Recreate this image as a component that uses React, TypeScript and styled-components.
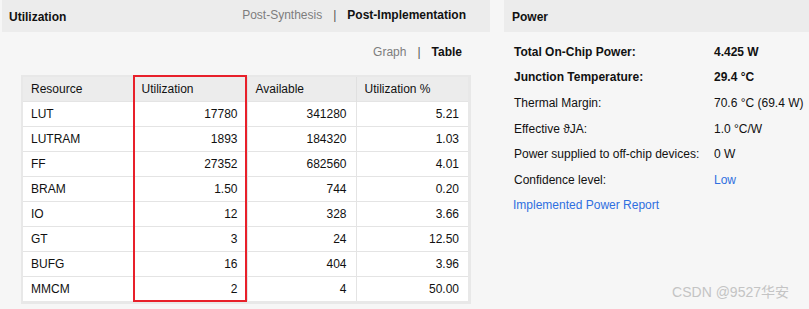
import React from "react";
import styled, { createGlobalStyle } from "styled-components";

const GlobalStyle = createGlobalStyle`
  html, body {
    margin: 0;
    padding: 0;
    background: #f6f6f6;
    font-family: "Liberation Sans", Arial, sans-serif;
    font-size: 12px;
    color: #111;
  }
`;

const Page = styled.div`
  position: relative;
  display: flex;
  gap: 14px;
  width: 809px;
  height: 309px;
  padding-left: 2px;
  box-sizing: border-box;
  overflow: hidden;
`;

const Panel = styled.div<{ $width?: number }>`
  display: flex;
  flex-direction: column;
  ${(p) => (p.$width ? `width: ${p.$width}px; flex-shrink: 0;` : "flex: 1; min-width: 0;")}
`;

const Header = styled.div`
  height: 32px;
  background: #ececec;
  display: flex;
  align-items: center;
  justify-content: space-between;
  padding: 0 24px 0 7px;
  flex-shrink: 0;
`;

const HeaderTitle = styled.div`
  font-weight: bold;
  font-size: 12px;
  padding-top: 1px;
`;

const Switch = styled.div`
  display: flex;
  align-items: center;
  gap: 11px;
  margin-top: -3px;
`;

const SwitchItem = styled.span<{ $active?: boolean }>`
  color: ${(p) => (p.$active ? "#111" : "#7d7d7d")};
  font-weight: ${(p) => (p.$active ? "bold" : "normal")};
`;

const Sep = styled.span`
  color: #555;
  font-size: 12px;
`;

const ViewSwitch = styled(Switch)`
  justify-content: flex-end;
  margin: 12px 28px 0 0;
  height: 15px;
`;

const TableWrap = styled.div`
  position: relative;
  margin: 16px 0 0 19px;
  width: 450px;
  background: #e8e8e8;
  padding: 2px 3px 3px 2px;
  box-sizing: border-box;
`;

const Table = styled.table`
  border-collapse: collapse;
  width: 445px;
  table-layout: fixed;
`;

const Th = styled.th<{ $w: number }>`
  box-sizing: border-box;
  width: ${(p) => p.$w}px;
  height: 24px;
  background: #ececec;
  font-weight: normal;
  text-align: left;
  padding: 0 8px;
  border-left: 1px solid #e0e0e0;
  &:first-child {
    border-left: none;
  }
`;

const Td = styled.td<{ $num?: boolean }>`
  box-sizing: border-box;
  height: 25px;
  background: #fff;
  text-align: ${(p) => (p.$num ? "right" : "left")};
  padding: 0 ${(p) => (p.$num ? "9px" : "8px")};
  border-top: 1px solid #e4e4e4;
  border-left: 1px solid #e4e4e4;
  &:first-child {
    border-left: none;
  }
`;

const Highlight = styled.div`
  position: absolute;
  left: 112px;
  top: 0;
  width: 114px;
  height: 227px;
  border: 2px solid #e8202a;
  box-sizing: border-box;
  pointer-events: none;
`;

const PowerGrid = styled.div`
  display: grid;
  grid-template-columns: 200px auto;
  grid-auto-rows: 25.6px;
  align-items: center;
  padding: 7px 0 0 10px;
`;

const Label = styled.div<{ $bold?: boolean }>`
  font-weight: ${(p) => (p.$bold ? "bold" : "normal")};
  white-space: nowrap;
`;

const Value = styled.div<{ $bold?: boolean; $link?: boolean }>`
  font-weight: ${(p) => (p.$bold ? "bold" : "normal")};
  color: ${(p) => (p.$link ? "#2f6fe0" : "#111")};
  white-space: nowrap;
`;

const ReportLink = styled.div`
  grid-column: 1 / span 2;
  color: #2f6fe0;
  margin-left: -1px;
`;

const Watermark = styled.div`
  position: absolute;
  right: 20px;
  bottom: 8px;
  color: #c4c4c4;
  font-size: 14px;
  font-family: "Liberation Sans", "Noto Sans CJK SC", sans-serif;
`;

const rows = [
  ["LUT", "17780", "341280", "5.21"],
  ["LUTRAM", "1893", "184320", "1.03"],
  ["FF", "27352", "682560", "4.01"],
  ["BRAM", "1.50", "744", "0.20"],
  ["IO", "12", "328", "3.66"],
  ["GT", "3", "24", "12.50"],
  ["BUFG", "16", "404", "3.96"],
  ["MMCM", "2", "4", "50.00"],
];

const power: { label: string; value: string; bold?: boolean; link?: boolean }[] = [
  { label: "Total On-Chip Power:", value: "4.425 W", bold: true },
  { label: "Junction Temperature:", value: "29.4 °C", bold: true },
  { label: "Thermal Margin:", value: "70.6 °C (69.4 W)" },
  { label: "Effective \u03D1JA:", value: "1.0 °C/W" },
  { label: "Power supplied to off-chip devices:", value: "0 W" },
  { label: "Confidence level:", value: "Low", link: true },
];

export default function App() {
  return (
    <>
      <GlobalStyle />
      <Page>
        <Panel $width={488}>
          <Header>
            <HeaderTitle>Utilization</HeaderTitle>
            <Switch>
              <SwitchItem>Post-Synthesis</SwitchItem>
              <Sep>|</Sep>
              <SwitchItem $active>Post-Implementation</SwitchItem>
            </Switch>
          </Header>
          <ViewSwitch>
            <SwitchItem>Graph</SwitchItem>
            <Sep>|</Sep>
            <SwitchItem $active>Table</SwitchItem>
          </ViewSwitch>
          <TableWrap>
            <Table>
              <thead>
                <tr>
                  <Th $w={110}>Resource</Th>
                  <Th $w={114}>Utilization</Th>
                  <Th $w={109}>Available</Th>
                  <Th $w={112}>Utilization %</Th>
                </tr>
              </thead>
              <tbody>
                {rows.map((r) => (
                  <tr key={r[0]}>
                    <Td>{r[0]}</Td>
                    <Td $num>{r[1]}</Td>
                    <Td $num>{r[2]}</Td>
                    <Td $num>{r[3]}</Td>
                  </tr>
                ))}
              </tbody>
            </Table>
            <Highlight />
          </TableWrap>
        </Panel>
        <Panel>
          <Header>
            <HeaderTitle style={{ marginLeft: 1 }}>Power</HeaderTitle>
          </Header>
          <PowerGrid>
            {power.map((p) => (
              <React.Fragment key={p.label}>
                <Label $bold={p.bold}>{p.label}</Label>
                <Value $bold={p.bold} $link={p.link}>
                  {p.value}
                </Value>
              </React.Fragment>
            ))}
            <ReportLink>Implemented Power Report</ReportLink>
          </PowerGrid>
        </Panel>
        <Watermark>CSDN @9527华安</Watermark>
      </Page>
    </>
  );
}
